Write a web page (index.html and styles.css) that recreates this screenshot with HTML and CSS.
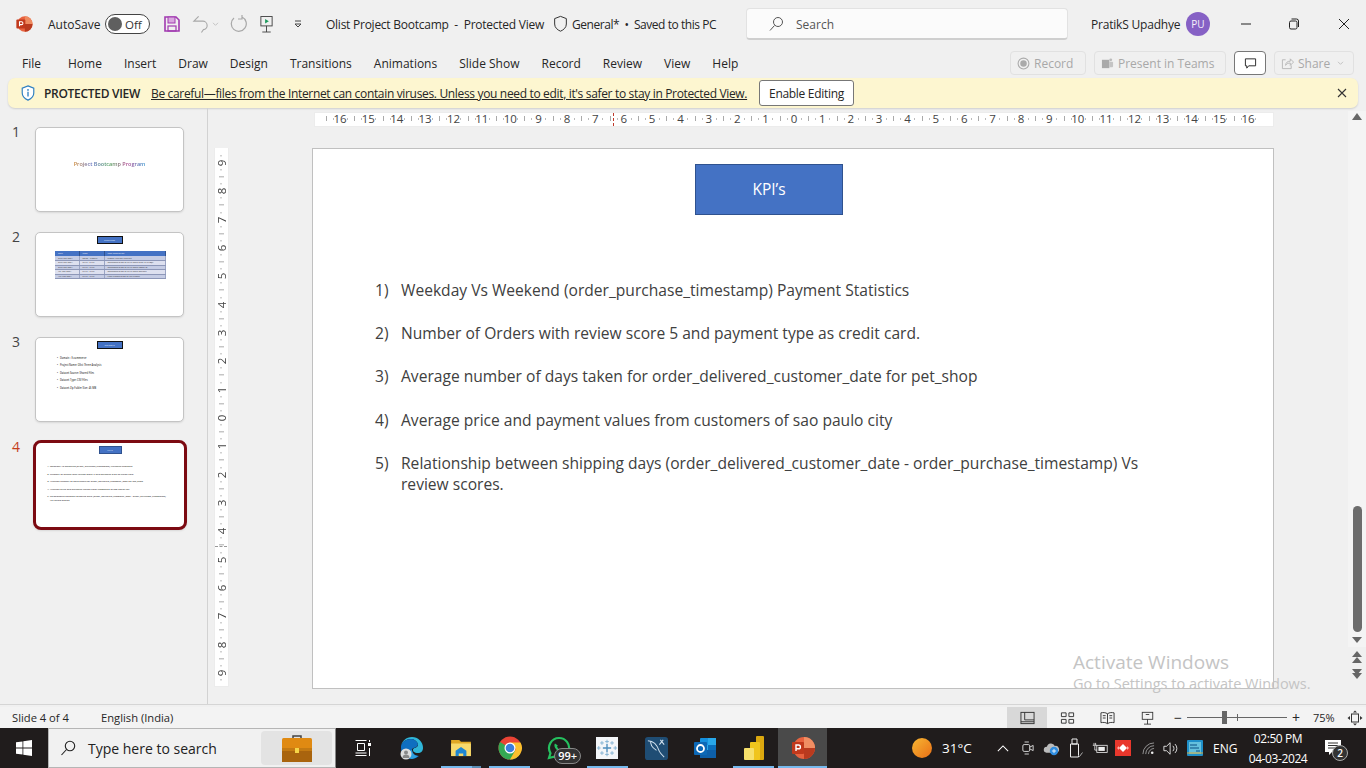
FILE: index.html
```html
<!DOCTYPE html>
<html lang="en">
<head>
<meta charset="utf-8">
<title>Olist Project Bootcamp - Protected View</title>
<link rel="stylesheet" href="styles.css">
</head>
<body>
<div class="app">
  <header class="titlebar">
    <svg class="ico pptlogo" viewBox="0 0 20 20"><circle cx="11" cy="10" r="8.5" fill="#e8623e"/><path d="M11 1.5a8.5 8.5 0 0 1 8.5 8.5H11z" fill="#ee8a5f"/><path d="M11 10h8.5a8.5 8.5 0 0 1-8.5 8.5z" fill="#b93a1e"/><rect x="1.5" y="5" width="10" height="10" rx="1" fill="#c1391c"/><path d="M5 12.5V7.5h2.2a1.6 1.6 0 0 1 0 3.2H5" fill="none" stroke="#fff" stroke-width="1.2"/></svg>
    <span class="autosave">AutoSave</span>
    <span class="toggle"><i class="knob"></i><em>Off</em></span>
    <svg class="ico save" viewBox="0 0 18 18"><path d="M2 2h11l3 3v11H2z" fill="none" stroke="#a13ab0" stroke-width="1.6"/><rect x="5" y="2" width="7" height="6" fill="#d9a7df" stroke="#a13ab0"/><rect x="5" y="11" width="8" height="5" fill="none" stroke="#a13ab0" stroke-width="1.2"/></svg>
    <svg class="ico undo" viewBox="0 0 18 20"><path d="M7 2L2 7h9a4.5 4.5 0 0 1 1 9l-2 3" fill="none" stroke="#a8a8a8" stroke-width="1.2"/></svg>
    <svg class="ico caretmini" viewBox="0 0 8 6"><path d="M1 1l3 3 3-3" fill="none" stroke="#bbb"/></svg>
    <svg class="ico redo" viewBox="0 0 18 20"><path d="M13 3a7.5 7.5 0 1 1-8 1M13 1v4h-4" fill="none" stroke="#a8a8a8" stroke-width="1.2"/></svg>
    <svg class="ico present" viewBox="0 0 16 20"><rect x="2" y="1.500" width="12" height="10" fill="none" stroke="#444"/><path d="M6.500 4l4 2.500-4 2.500z" fill="#1c9a5b"/><path d="M8 11.500V18M3.500 18h9" stroke="#444" fill="none"/></svg>
    <svg class="ico qat" viewBox="0 0 10 10"><path d="M2 2h6M2 5l3 3 3-3z" stroke="#444" fill="none"/></svg>
    <span class="doc name">Olist Project Bootcamp&nbsp; -&nbsp; Protected View</span>
    <svg class="ico shield" viewBox="0 0 16 20"><path d="M8 1.500l6.500 2.500v6c0 4-3 6.500-6.500 8-3.500-1.500-6.500-4-6.500-8V4z" fill="none" stroke="#333" stroke-width="1.100"/></svg>
    <span class="doc general">General*&nbsp; •&nbsp; Saved to this PC</span>
    <div class="search">
      <svg class="ico" viewBox="0 0 16 16"><circle cx="10" cy="6" r="4.500" fill="none" stroke="#555"/><path d="M6.500 9.500L2 14.500" stroke="#555"/></svg>
      <span>Search</span>
    </div>
    <span class="user">PratikS Upadhye</span>
    <span class="avatar">PU</span>
    <svg class="ico winbtn min" viewBox="0 0 12 12"><path d="M1 6h10" stroke="#222"/></svg>
    <svg class="ico winbtn max" viewBox="0 0 12 12"><rect x="1.500" y="3" width="7.500" height="8" rx="1.500" fill="none" stroke="#222"/><path d="M3.500 1h5a2 2 0 0 1 2 2v6" fill="none" stroke="#222"/></svg>
    <svg class="ico winbtn close" viewBox="0 0 12 12"><path d="M1 1l10 10M11 1L1 11" stroke="#222"/></svg>
  </header>

  <nav class="tabs">
    <span class="tab t-file">File</span>
    <span class="tab">Home</span>
    <span class="tab">Insert</span>
    <span class="tab">Draw</span>
    <span class="tab">Design</span>
    <span class="tab">Transitions</span>
    <span class="tab">Animations</span>
    <span class="tab">Slide Show</span>
    <span class="tab">Record</span>
    <span class="tab">Review</span>
    <span class="tab">View</span>
    <span class="tab">Help</span>
    <div class="actions">
      <span class="act a-rec"><svg class="ico" viewBox="0 0 12 12"><circle cx="6" cy="6" r="5" fill="none" stroke="#aaa"/><circle cx="6" cy="6" r="3" fill="#aaa"/></svg>Record</span>
      <span class="act a-teams"><svg class="ico" viewBox="0 0 14 14"><rect x="1" y="3" width="8" height="9" fill="#aaa"/><rect x="9" y="5" width="4" height="6" rx="1" fill="#c4c4c4"/><circle cx="10.500" cy="3" r="1.500" fill="#bbb"/></svg>Present in Teams</span>
      <span class="act a-comment"><svg class="ico" viewBox="0 0 14 14"><path d="M1.500 2h11v7.500H5L3 12V9.500H1.500z" fill="none" stroke="#222"/></svg></span>
      <span class="act a-share"><svg class="ico" viewBox="0 0 14 14"><path d="M5 3H1.500v9.500h9.500V9M5 9c0-3 2-4.500 5-4.500V2l3.500 3.500L10 9V6.500C8 6.500 6 7 5 9z" fill="none" stroke="#b5b5b5"/></svg>Share<svg class="ico sharecaret" viewBox="0 0 8 6"><path d="M1 1l3 3 3-3" fill="none" stroke="#bbb"/></svg></span>
    </div>
  </nav>

  <div class="banner">
    <svg class="ico" viewBox="0 0 16 18"><path d="M8 1l6.500 2.500v5.500c0 4-3 6.500-6.500 8-3.500-1.500-6.500-4-6.500-8V3.500z" fill="#fff" stroke="#2d7fc1" stroke-width="1.300"/><circle cx="8" cy="5.500" r="1" fill="#2d7fc1"/><path d="M8 7.500v5.500" stroke="#2d7fc1" stroke-width="1.500"/></svg>
    <strong>PROTECTED VIEW</strong>
    <a class="warn">Be careful—files from the Internet can contain viruses. Unless you need to edit, it's safer to stay in Protected View.</a>
    <span class="enable">Enable Editing</span>
    <svg class="ico bclose" viewBox="0 0 10 10"><path d="M1 1l8 8M9 1L1 9" stroke="#333" stroke-width="1.100"/></svg>
  </div>

  <main class="work">
    <aside class="thumbs">
      <div class="trow"><span class="num">1</span>
        <div class="thumb t1"><span class="rainbow">Project Bootcamp Program</span></div>
      </div>
      <div class="trow"><span class="num">2</span>
        <div class="thumb">
          <span class="tbox black">Timelines</span>
          <table class="ttable">
            <tr><th>Date</th><th>Time</th><th>Task Description</th></tr>
            <tr><td>27th Feb 2024</td><td>08.00 - 9.00PM</td><td>Project Kick-off Meeting</td></tr>
            <tr><td>27th Feb 2024</td><td>3 PM - 6 PM</td><td>Implementation of KPI's using Excel &amp; MySQL</td></tr>
            <tr><td>27th Feb 2024</td><td>8 PM - 9 PM</td><td>Implementation of KPI's using Power BI</td></tr>
            <tr><td>1st Mar 2024</td><td>8 PM - 9 PM</td><td>Implementation of KPI's using Tableau</td></tr>
            <tr><td>4th Mar 2024</td><td>8 PM - 9 PM</td><td>Final Presentation of the Project</td></tr>
          </table>
        </div>
      </div>
      <div class="trow"><span class="num">3</span>
        <div class="thumb">
          <span class="tbox black">Datasets</span>
          <ul class="tlist">
            <li>Domain : E-commerce</li>
            <li>Project Name: Olist Three Analysis</li>
            <li>Dataset Source: Shared Files</li>
            <li>Dataset Type: CSV Files</li>
            <li>Dataset Zip Folder Size: 45 MB</li>
          </ul>
        </div>
      </div>
      <div class="trow current"><span class="num">4</span>
        <div class="thumb">
          <span class="tbox navy">KPI's</span>
          <ol class="tkpi">
            <li>Weekday Vs Weekend (order_purchase_timestamp) Payment Statistics</li>
            <li>Number of Orders with review score 5 and payment type as credit card.</li>
            <li>Average number of days taken for order_delivered_customer_date for pet_shop</li>
            <li>Average price and payment values from customers of sao paulo city</li>
            <li>Relationship between shipping days (order_delivered_customer_date - order_purchase_timestamp) Vs review scores.</li>
          </ol>
        </div>
      </div>
    </aside>

    <section class="editor">
      <div class="hruler">
        <span>16</span><span>15</span><span>14</span><span>13</span><span>12</span><span>11</span><span>10</span><span>9</span><span>8</span><span>7</span><span>6</span><span>5</span><span>4</span><span>3</span><span>2</span><span>1</span><span>0</span><span>1</span><span>2</span><span>3</span><span>4</span><span>5</span><span>6</span><span>7</span><span>8</span><span>9</span><span>10</span><span>11</span><span>12</span><span>13</span><span>14</span><span>15</span><span>16</span>
        <i class="hmark"></i>
      </div>
      <div class="stage">
        <div class="vruler">
          <span>9</span><span>8</span><span>7</span><span>6</span><span>5</span><span>4</span><span>3</span><span>2</span><span>1</span><span>0</span><span>1</span><span>2</span><span>3</span><span>4</span><span>5</span><span>6</span><span>7</span><span>8</span><span>9</span>
          <i class="vmark"></i>
        </div>
        <article class="slide">
          <div class="kpi">KPI’s</div>
          <ol class="points">
            <li>Weekday Vs Weekend (order_purchase_timestamp) Payment Statistics</li>
            <li>Number of Orders with review score 5 and payment type as credit card.</li>
            <li>Average number of days taken for order_delivered_customer_date for pet_shop</li>
            <li>Average price and payment values from customers of sao paulo city</li>
            <li>Relationship between shipping days (order_delivered_customer_date - order_purchase_timestamp) Vs review scores.</li>
          </ol>
        </article>
      </div>
      <div class="scroll">
        <i class="up"></i>
        <span class="space"></span>
        <span class="thumbbar"></span>
        <i class="down"></i>
        <i class="dbl-up"></i>
        <i class="dbl-down"></i>
      </div>
      <div class="activate">
        <b>Activate Windows</b>
        <span>Go to Settings to activate Windows.</span>
      </div>
    </section>
  </main>

  <footer class="status">
    <span class="s-slide">Slide 4 of 4</span>
    <span class="s-lang">English (India)</span>
    <div class="viewbtns">
      <span class="vb on"><svg class="ico" viewBox="0 0 16 14"><rect x="1" y="1" width="14" height="12" fill="none" stroke="#333"/><path d="M5 1v8h10M1 11h14" fill="none" stroke="#333"/></svg></span>
      <span class="vb"><svg class="ico" viewBox="0 0 16 14"><path d="M1.500 1.500h5v4h-5zM9.500 1.500h5v4h-5zM1.500 8.500h5v4h-5zM9.500 8.500h5v4h-5z" fill="none" stroke="#333"/></svg></span>
      <span class="vb"><svg class="ico" viewBox="0 0 16 14"><path d="M8 2.500C6 1 3 1 1 1.500v10.500c2-.5 5-.5 7 1 2-1.500 5-1.500 7-1V1.500C13 1 10 1 8 2.500zM8 2.500V13M3 4.500h3M3 7h3M10 4.500h3M10 7h3" fill="none" stroke="#333"/></svg></span>
      <span class="vb"><svg class="ico" viewBox="0 0 16 16"><rect x="2" y="1.500" width="12" height="8" fill="none" stroke="#333"/><path d="M8 9.500V15M4 15h8M6 4h4" fill="none" stroke="#333"/></svg></span>
    </div>
    <div class="zoom">
      <span class="zsign">−</span>
      <span class="ztrack"><i class="ztick"></i><i class="zhandle"></i></span>
      <span class="zsign">+</span>
      <span class="zpct">75%</span>
      <svg class="ico zfit" viewBox="0 0 16 16"><rect x="4.500" y="4" width="7" height="8" fill="none" stroke="#333"/><path d="M8 .5L6 2.500h4zM8 15.500L6 13.500h4zM.5 8L3 6v4zM15.500 8L13 6v4z" fill="#333"/></svg>
    </div>
  </footer>

  <div class="taskbar">
    <span class="start"><svg class="ico" viewBox="0 0 16 16"><path d="M0 2.300l6.500-.9v6.200H0zM7.300 1.300L16 0v7.600H7.300zM0 8.400h6.500v6.200L0 13.700zM7.300 8.400H16V16l-8.700-1.200z" fill="#fff"/></svg></span>
    <div class="tsearch">
      <svg class="ico" viewBox="0 0 16 16"><circle cx="10" cy="6" r="4.700" fill="none" stroke="#222" stroke-width="1.100"/><path d="M6.500 9.500L1.500 15" stroke="#222" stroke-width="1.100"/></svg>
      <span>Type here to search</span>
      <span class="brief"><svg class="ico" viewBox="0 0 30 28"><path d="M11 5V2h8v3" fill="none" stroke="#444" stroke-width="1.500"/><rect y="4" width="30" height="24" rx="1.500" fill="#e08a12"/><rect y="16" width="30" height="12" fill="#a9640e"/><rect y="14" width="30" height="3" fill="#c47a12"/><rect x="13" y="14" width="4" height="5" fill="#f5d547"/></svg></span>
    </div>
    <div class="apps">
      <span class="app-i"><svg class="ico i-tv" viewBox="0 0 16 16"><path d="M.5.500h11M2.500 3.500h7v7h-7zM.5 13h11M.5 15.500h11" fill="none" stroke="#fff"/><rect x="13" y="3" width="3" height="3" fill="#fff"/><path d="M14.500 0v2M14.500 8v8" stroke="#fff"/></svg></span>
      <span class="app-i"><svg class="ico" viewBox="0 0 24 24"><path d="M12 1a11 11 0 0 1 11 11c0 3-2 5-5 5-4 0-5-2-5-3 0-3 5-1 5-6-1-3-4-5-7-5C6 3 2 6 1 10 2 5 6 1 12 1z" fill="#2fb6d9"/><path d="M1 10c1-4 5-7 10-7 3 0 6 2 7 5-1 5-6 3-6 6 0 3 3 6 7 6a11 11 0 0 1-7 3A11 11 0 0 1 1 12z" fill="#0f6fc0"/><path d="M18 20a11 11 0 0 1-6 3c-2 0-3-1-3-3 0-3 1-6 3-6 0 3 3 6 6 6z" fill="#2da0e0"/><circle cx="6" cy="18" r="5.500" fill="#ddd"/><circle cx="6" cy="16.500" r="2" fill="#888"/><path d="M2.500 22c0-2.500 1.500-3.500 3.500-3.500s3.500 1 3.500 3.500z" fill="#888"/></svg></span>
      <span class="app-i run multi"><svg class="ico i-folder" viewBox="0 0 24 20"><path d="M1 1h9l2 2h11v16H1z" fill="#e0a825"/><path d="M1 5h22v14H1z" fill="#f7d96c"/><path d="M6 19v-6l6-4 6 4v6h-3.500v-3h-5v3z" fill="#1f87d3"/></svg></span>
      <span class="app-i run"><svg class="ico" viewBox="0 0 24 24"><circle cx="12" cy="12" r="11.500" fill="#ea4335"/><path d="M12 12L22 18A11.500 11.500 0 0 1 12 23.500 11.500 11.500 0 0 1 .5 12 11.500 11.500 0 0 1 2 6z" fill="#34a853"/><path d="M12 6.500H22.500A11.500 11.500 0 0 1 12 23.500L18 13z" fill="#fbc02d"/><circle cx="12" cy="12" r="5.500" fill="#fff"/><circle cx="12" cy="12" r="4.300" fill="#3b7ddd"/></svg></span>
      <span class="app-i wa"><svg class="ico" viewBox="0 0 24 24"><path d="M12 2a10 10 0 0 0-8.500 15.200L2 22l5-1.400A10 10 0 1 0 12 2z" fill="none" stroke="#25c05f" stroke-width="2.200"/><path d="M8 7.500c-1.500 2 0 5 2.500 7 2.500 2 4.500 2.500 6 1l-2-2.500-1.500.8c-1.500-.8-2.300-1.800-3-3l.8-1.300z" fill="#25c05f"/></svg><b class="badge">99+</b></span>
      <span class="app-i run"><svg class="ico i-tab" viewBox="0 0 24 24"><rect width="24" height="24" fill="#f4f6f9"/><path d="M12 7.500v9M7.500 12h9" stroke="#4f8fbd" stroke-width="1.500"/><path d="M12 3v4M10 5h4M12 17v4M10 19h4M3 10v4M1 12h4M21 10v4M19 12h4M6.500 4.500v4M4.500 6.500h4M17.500 4.500v4M15.500 6.500h4M6.500 15.500v4M4.500 17.500h4M17.500 15.500v4M15.500 17.500h4" stroke="#7fb0d2"/></svg></span>
      <span class="app-i"><svg class="ico i-sql" viewBox="0 0 24 24"><rect width="24" height="24" rx="3" fill="#1f4d74"/><path d="M3 4c6 0 10 5 12 11 1 2 3 4 5 6M6 4c-1 5 3 8 6 10M16 3l4 5M19 3l-4 5" fill="none" stroke="#cfe0ee" stroke-width="1.100"/></svg></span>
      <span class="app-i"><svg class="ico" viewBox="0 0 24 24"><rect x="7" y="2" width="16" height="20" rx="1" fill="#1490df"/><rect x="15" y="2" width="8" height="7" fill="#28a8ea"/><rect x="7" y="9" width="8" height="7" fill="#28a8ea"/><rect x="15" y="9" width="8" height="7" fill="#0a6fbd"/><path d="M7 14h16v8H7z" fill="#0d5fa8"/><rect x="1" y="6" width="13" height="13" rx="1" fill="#0c68b6"/><circle cx="7.500" cy="12.500" r="3.500" fill="none" stroke="#fff" stroke-width="1.800"/></svg></span>
      <span class="app-i run"><svg class="ico i-bi" viewBox="0 0 20 24"><rect x="12" y="0" width="8" height="24" rx="1" fill="#dca80f"/><rect x="6" y="6" width="10" height="18" rx="1" fill="#f0c51d"/><rect x="0" y="12" width="10" height="12" rx="1" fill="#f7e06b"/></svg></span>
      <span class="app-i run current"><svg class="ico" viewBox="0 0 24 24"><circle cx="13" cy="12" r="11" fill="#e8623e"/><path d="M13 1a11 11 0 0 1 11 11H13z" fill="#f08e63"/><path d="M13 12h11a11 11 0 0 1-11 11z" fill="#b93a1e"/><rect x="1" y="6" width="12" height="12" rx="1" fill="#c1391c"/><path d="M5 15V9h2.500a1.800 1.800 0 0 1 0 3.800H5" fill="none" stroke="#fff" stroke-width="1.400"/></svg></span>
    </div>
    <div class="tray">
      <svg class="ico sun" viewBox="0 0 20 20"><defs><linearGradient id="sung" x1="0" y1="0" x2="1" y2="1"><stop offset="0" stop-color="#f7b733"/><stop offset="1" stop-color="#ea6f16"/></linearGradient></defs><circle cx="10" cy="10" r="10" fill="url(#sung)"/></svg>
      <span class="temp">31°C</span>
      <svg class="ico chev" viewBox="0 0 14 10"><path d="M1 8l6-6 6 6" fill="none" stroke="#fff" stroke-width="1.200"/></svg>
      <svg class="ico t1i" viewBox="0 0 14 18"><rect x="1" y="5" width="8" height="8" rx="1.500" fill="none" stroke="#eee"/><path d="M9 8l4-2v6l-4-2M3 2h5M3 16h5" fill="none" stroke="#eee"/></svg>
      <svg class="ico t2i" viewBox="0 0 20 18"><path d="M4 14a3.500 3.500 0 0 1 .5-7 5 5 0 0 1 9.500-1 4 4 0 0 1 2 8z" fill="#bbb"/><circle cx="13" cy="12" r="5" fill="#2f8de0"/><path d="M10.500 12h5M13 9.500v5" stroke="#fff"/></svg>
      <svg class="ico t3i" viewBox="0 0 13 20"><path d="M2 1h5v5H2zM.5 6h8v13h-8z" fill="none" stroke="#eee"/><path d="M8 17l1.500 1.500 3-4" fill="none" stroke="#aaa"/></svg>
      <svg class="ico t4i" viewBox="0 0 20 16"><rect x="6" y="4" width="13" height="9" fill="none" stroke="#eee"/><rect x="8" y="6" width="8" height="5" fill="#eee"/><path d="M1 4h5M2.500 1v3M4.500 1v3M3.500 5v5h3" stroke="#eee" fill="none"/></svg>
      <svg class="ico t5i" viewBox="0 0 16 16"><rect width="16" height="16" fill="#e9372c"/><path d="M8 4l4 4-4 4-4-4z" fill="#fff"/><path d="M2 8l2-2v4zM14 8l-2-2v4z" fill="#ffb3ad"/></svg>
      <svg class="ico t6i" viewBox="0 0 14 14"><path d="M1 13a12 12 0 0 1 12-12M4 13a9 9 0 0 1 9-9M7 13a6 6 0 0 1 6-6" fill="none" stroke="#9a9a9a"/><circle cx="11" cy="11.500" r="1.400" fill="#eee"/></svg>
      <svg class="ico t7i" viewBox="0 0 18 16"><path d="M1 5.500h3l4-4v13l-4-4H1zM11 5a4 4 0 0 1 0 6M13.500 3a7 7 0 0 1 0 10" fill="none" stroke="#eee"/></svg>
      <svg class="ico t8i" viewBox="0 0 16 16"><rect width="16" height="16" rx="1" fill="#1f8fc9"/><rect x="2" y="2" width="12" height="12" fill="#65c0dd"/><path d="M3 5h7M3 8h9M9 11h4" stroke="#0b4f82"/><path d="M0 13h16" stroke="#d8a93a"/></svg>
      <span class="eng">ENG</span>
      <span class="clock"><span>02:50 PM</span><span>04-03-2024</span></span>
      <span class="notif"><svg class="ico" viewBox="0 0 16 16"><path d="M0 0h16v12H7l-3 3v-3H0z" fill="#fff"/><path d="M3 3h10M3 5.500h10M3 8h10" stroke="#333"/></svg><b class="nbadge">2</b></span>
    </div>
  </div>
</div>
</body>
</html>
```
FILE: styles.css
```css
* { box-sizing: border-box; }
html, body { margin: 0; height: 100%; overflow: hidden; }
body { font-family: "Open Sans", "Noto Sans", "Liberation Sans", sans-serif; color: #262626; background: #f0f0f0; }
.ico { display: block; flex: none; width: 16px; height: 16px; }
.app { width: 1366px; height: 768px; display: flex; flex-direction: column; }

.titlebar { height: 48px; flex: none; display: flex; align-items: center; font-size: 12px; padding-left: 15px; }
.pptlogo { width: 18px; height: 18px; }
.autosave { margin-left: 15px; width: 56px; }
.toggle { margin-left: 1px; width: 45px; height: 20px; border: 1.500px solid #444; border-radius: 10px; background: #fff; display: flex; align-items: center; padding-left: 2px; gap: 3px; }
.knob { width: 14px; height: 14px; border-radius: 50%; background: #5f5f5f; }
.toggle em { font-style: normal; font-size: 11.500px; color: #333; }
.save { width: 18px; height: 18px; margin-left: 13px; }
.undo { width: 17px; height: 20px; margin-left: 11px; }
.caretmini { width: 7px; height: 5px; margin-left: 3px; }
.redo { width: 18px; height: 20px; margin-left: 10px; }
.present { width: 15px; height: 19px; margin-left: 12px; }
.qat { width: 10px; height: 10px; margin-left: 19px; }
.doc { white-space: nowrap; }
.name { margin-left: 23px; width: 226px; letter-spacing: -.25px; }
.shield { width: 15px; height: 18px; margin-left: 1px; }
.general { margin-left: 4px; width: 160px; letter-spacing: -.45px; }
.search { margin-left: 14px; width: 322px; height: 32px; background: #fbfbfb; border: 1px solid #e2e2e2; border-bottom: 2px solid #cfcfcf; border-radius: 4px; display: flex; align-items: center; gap: 12px; padding: 1px 0 0 21px; color: #555; font-size: 12px; }
.user { margin-left: 23px; width: 95px; white-space: nowrap; letter-spacing: -.2px; }
.avatar { width: 24px; height: 24px; border-radius: 50%; background: #8661c5; color: #f5f0fa; font-size: 10px; display: flex; align-items: center; justify-content: center; }
.winbtn { width: 12px; height: 12px; }
.min { margin-left: 30px; }
.max { margin-left: 36px; }
.close { margin-left: 38px; }

.tabs { height: 30px; flex: none; display: flex; align-items: center; font-size: 12px; padding-left: 22px; }
.tab { margin-right: 22px; white-space: nowrap; }
.t-file { margin-right: 27px; }
.actions { margin-left: auto; display: flex; gap: 8px; padding-right: 12px; height: 24px; }
.act { display: flex; align-items: center; gap: 4px; padding: 0 6px; border: 1px solid #e1e1e1; border-radius: 4px; color: #a8a8a8; font-size: 12px; white-space: nowrap; }
.act .ico { width: 13px; height: 13px; }
.a-rec { width: 76px; }
.a-teams { width: 132px; }
.a-comment { width: 32px; justify-content: center; border-color: #777; background: #fff; }
.a-share { width: 80px; }
.act .sharecaret { width: 7px; height: 5px; margin-left: 3px; }

.banner { height: 30px; flex: none; margin: 0 8px; padding-left: 12px; background: #fdf6d0; border-radius: 7px; box-shadow: 0 1px 2px rgba(0,0,0,.14); display: flex; align-items: center; font-size: 12px; }
.banner strong { font-weight: 600; margin-left: 8px; white-space: nowrap; letter-spacing: -.3px; width: 107px; }
.warn { text-decoration: underline; white-space: nowrap; letter-spacing: -.335px; width: 596px; }
.enable { margin-left: 12px; width: 95px; height: 26px; border: 1px solid #777; border-radius: 3px; background: #fff; display: flex; align-items: center; justify-content: center; white-space: nowrap; letter-spacing: -.3px; }
.bclose { width: 10px; height: 10px; margin-left: auto; margin-right: 11px; }

.work { flex: 1; min-height: 0; display: flex; margin-bottom: 2px; border-bottom: 1px solid #d5d5d5; }
.thumbs { width: 208px; flex: none; border-right: 1px solid #d2d2d2; padding: 19px 0 0 0; display: flex; flex-direction: column; }
.trow { height: 105px; display: flex; padding-left: 12px; }
.num { width: 23px; font-size: 14px; line-height: 10px; color: #444; }
.thumb { width: 149px; height: 85px; background: #fff; border: 1px solid #c4c4c4; border-radius: 5px; box-shadow: 0 1px 2px rgba(0,0,0,.1); display: flex; flex-direction: column; align-items: center; overflow: hidden; font-size: 2.200px; color: #333; }
.t1 { justify-content: center; padding-bottom: 12px; }
.rainbow { font-size: 5.500px; font-weight: 600; background: linear-gradient(90deg,#c9822e,#5c6bc0,#4a9c54,#b0458f,#2d8dcb); -webkit-background-clip: text; background-clip: text; color: transparent; }
.tbox { margin-top: 3px; width: 26px; height: 8px; background: #4472c4; color: #dfe8f8; font-size: 2.500px; display: flex; align-items: center; justify-content: center; flex: none; }
.black { border: 1px solid #111; }
.navy { border: 1px solid #2f528f; width: 23px; }
.ttable { margin: 7px 0 0 2px; width: 111px; border-collapse: collapse; font-size: 2.200px; color: #333; }
.ttable th { background: #4472c4; color: #e8eefa; height: 5px; text-align: left; padding: 0 3px; border-right: 1px solid #2f528f; font-weight: 400; }
.ttable td { height: 4.500px; padding: 0 3px; background: #c5cce4; border-bottom: .5px solid #8d97b8; border-right: 1px solid #9aa4c4; white-space: nowrap; }
.ttable tr:nth-child(odd) td { background: #dde0ef; }
.ttable th:nth-child(1), .ttable td:nth-child(1) { width: 24px; }
.ttable th:nth-child(2), .ttable td:nth-child(2) { width: 25px; }
.tlist { align-self: flex-start; margin: 7px 0 0 21px; padding: 0; list-style: none; display: flex; flex-direction: column; gap: 3.400px; font-size: 2.500px; font-weight: 600; color: #444; }
.tlist li::before { content: "•"; margin-right: 2px; }
.tkpi { align-self: stretch; margin: 10px 18px 0 10px; padding: 0 0 0 4px; display: flex; flex-direction: column; gap: 3.500px; font-size: 2.450px; font-weight: 600; color: #444; }
.trow.current { margin-top: -2px; padding-left: 12px; height: 90px; }
.current .num { width: 21px; margin-top: 2px; color: #c43e1c; }
.current .thumb { width: 154px; height: 90px; border: 3px solid #7c0a12; border-radius: 8px; }

.editor { flex: 1; min-width: 0; position: relative; display: flex; flex-direction: column; }
.hruler { position: relative; width: 960px; height: 15px; margin: 4px 0 0 106px; background: #fff; border: 1px solid #ececec; flex: none; padding-left: 10.800px; display: flex; font-size: 11.500px; line-height: 12px; color: #444; }
.hruler span { width: 28.375px; flex: none; text-align: center; background: linear-gradient(#aaa,#aaa) 0 3px/1px 5px no-repeat, linear-gradient(#bbb,#bbb) 7px 5px/1px 2px no-repeat, linear-gradient(#bbb,#bbb) 21px 5px/1px 2px no-repeat; }
.hmark { position: absolute; left: 298px; top: 0; height: 13px; border-left: 1px dashed #c0392b; }
.stage { flex: none; display: flex; padding: 21px 0 0 6px; }
.vruler { position: relative; width: 15px; height: 539px; padding-top: 1px; background: #fff; border: 1px solid #ececec; border-top: 0; display: flex; flex-direction: column; font-size: 11.500px; color: #444; overflow: hidden; }
.vruler span { height: 28.330px; flex: none; display: flex; align-items: center; justify-content: center; writing-mode: vertical-rl; transform: rotate(180deg); line-height: 13px; background: linear-gradient(#aaa,#aaa) 4px 0/5px 1px no-repeat, linear-gradient(#bbb,#bbb) 6px 7px/2px 1px no-repeat, linear-gradient(#bbb,#bbb) 6px 21px/2px 1px no-repeat; }
.vmark { position: absolute; left: 0; top: 398px; width: 12px; border-top: 1px dashed #999; }
.slide { margin-left: 83px; width: 962px; height: 541px; background: #fff; border: 1px solid #c0c0c0; display: flex; flex-direction: column; }
.kpi { align-self: flex-start; margin: 15px 0 0 382px; width: 148px; height: 51px; padding-bottom: 1px; background: #4472c4; border: 1px solid #2f528f; color: #fff; font-size: 15.500px; display: flex; align-items: center; justify-content: center; flex: none; }
.points { margin: 65px 120px 0 62px; padding: 0 0 0 26px; font-size: 15.600px; line-height: 21px; color: #404040; display: flex; flex-direction: column; gap: 22.200px; list-style: none; counter-reset: pt; }
.points li { counter-increment: pt; }
.points li::before { content: counter(pt) ")"; display: inline-block; width: 26px; margin-left: -26px; }
.scroll { position: absolute; right: 0; top: 3px; bottom: 25px; width: 18px; display: flex; flex-direction: column; align-items: center; background: linear-gradient(#f4f4f4,#f4f4f4) 0 0/100% 536px no-repeat; }
.up, .down, .dbl-up, .dbl-down { display: block; flex: none; width: 0; height: 0; border-left: 5px solid transparent; border-right: 5px solid transparent; }
.up { border-bottom: 7px solid #666; margin-top: 2px; }
.space { flex: 1; }
.thumbbar { width: 9px; height: 126px; background: #6c6c6c; border-radius: 5px; flex: none; margin-bottom: 5px; }
.down { border-top: 6px solid #666; margin-bottom: 8px; }
.dbl-up { border-bottom: 6px solid #666; margin-bottom: 13px; position: relative; }
.dbl-up::after { content: ""; position: absolute; left: -5px; top: 6px; border-left: 5px solid transparent; border-right: 5px solid transparent; border-bottom: 6px solid #666; }
.dbl-down { border-top: 6px solid #666; position: relative; margin-top: 3px; }
.dbl-down::after { content: ""; position: absolute; left: -5px; top: -10px; border-left: 5px solid transparent; border-right: 5px solid transparent; border-top: 6px solid #666; }
.activate { position: absolute; left: 865px; top: 542px; color: #c4c4c4; pointer-events: none; white-space: nowrap; }
.activate b { display: block; font-weight: 400; font-size: 19px; line-height: 24px; }
.activate span { display: block; font-size: 14.500px; line-height: 20px; }

.status { height: 21px; flex: none; display: flex; align-items: center; font-size: 11.200px; background: #f3f3f3; padding-left: 12px; }
.s-slide { width: 89px; white-space: nowrap; }
.s-lang { white-space: nowrap; }
.viewbtns { margin-left: auto; display: flex; height: 21px; }
.vb { width: 40px; display: flex; align-items: center; justify-content: center; }
.vb .ico { width: 15px; height: 14px; }
.vb.on { background: #d8d8d8; }
.zoom { width: 201px; margin-left: -2px; display: flex; align-items: center; padding: 0 3px 0 8px; gap: 4px; font-size: 11px; }
.zsign { font-size: 14px; line-height: 14px; width: 10px; text-align: center; }
.ztrack { position: relative; width: 100px; height: 1px; background: #666; display: block; }
.ztick { position: absolute; left: 50px; top: -3px; height: 7px; width: 1px; background: #666; }
.zhandle { position: absolute; left: 35px; top: -6px; height: 13px; width: 5px; background: #666; }
.zpct { margin-left: 8px; }
.zfit { margin-left: auto; }

.taskbar { height: 40px; flex: none; background: #201c1c; display: flex; align-items: stretch; color: #fff; }
.start { width: 48px; display: flex; align-items: center; justify-content: center; }
.tsearch { width: 288px; background: #f1f1f1; border: 1px solid #b5b5b5; border-right-color: #888; display: flex; align-items: center; padding-left: 11px; color: #222; font-size: 14px; }
.tsearch > span:not(.brief) { margin-left: 12px; white-space: nowrap; }
.brief { margin-left: auto; margin-right: 3px; width: 71px; height: 34px; background: #e3e3e3; border-radius: 4px; display: flex; align-items: center; justify-content: center; }
.brief .ico { width: 30px; height: 28px; }
.apps { display: flex; margin-left: 3px; }
.app-i { width: 48.800px; position: relative; display: flex; align-items: center; justify-content: center; }
.app-i .ico { width: 24px; height: 24px; }
.app-i .i-tv { width: 16px; height: 16px; }
.app-i .i-folder { width: 22px; height: 18px; }
.app-i .i-tab { width: 22px; height: 22px; }
.app-i .i-sql { width: 23px; height: 23px; }
.app-i .i-bi { width: 20px; height: 24px; }
.run::after { content: ""; position: absolute; left: 4px; right: 4px; bottom: 0; height: 2px; background: #76b9ed; }
.multi::after { background: linear-gradient(90deg, #76b9ed 78%, #5a8cb3 78%); }
.app-i.current { background: #4a4a4a; }
.current.run::after { left: 0; right: 0; }
.badge { position: absolute; left: 20px; top: 20px; padding: 0 3px; height: 16px; background: #333; border: 1px solid #888; border-radius: 8px; font-size: 11px; line-height: 14px; font-weight: 600; color: #fff; }
.tray { margin-left: auto; display: flex; align-items: center; padding-right: 24px; }
.tray .sun { width: 20px; height: 20px; }
.temp { margin-left: 10px; font-size: 13.500px; width: 39px; }
.tray .chev { width: 12px; height: 9px; margin-left: 16px; }
.tray .t1i { margin-left: 13px; width: 12px; height: 16px; }
.tray .t2i { margin-left: 9px; width: 17px; height: 15px; }
.tray .t3i { margin-left: 10px; width: 13px; height: 20px; }
.tray .t4i { margin-left: 9px; width: 16px; height: 13px; }
.tray .t5i { margin-left: 7px; width: 16px; height: 16px; }
.tray .t6i { margin-left: 11px; width: 13px; height: 13px; }
.tray .t7i { margin-left: 8px; width: 16px; height: 15px; }
.tray .t8i { margin-left: 8px; width: 16px; height: 16px; }
.eng { margin-left: 10px; font-size: 12px; width: 36px; }
.clock { width: 58px; padding-top: 1px; display: flex; flex-direction: column; align-items: center; font-size: 12px; line-height: 20px; white-space: nowrap; letter-spacing: -.4px; }
.notif { position: relative; margin-left: 18px; width: 17px; }
.notif .ico { width: 16px; height: 16px; }
.nbadge { position: absolute; left: 7px; top: 5px; width: 16px; height: 16px; border-radius: 50%; background: #333; border: 1px solid #aaa; font-size: 10px; line-height: 14px; text-align: center; font-weight: 600; }
```
